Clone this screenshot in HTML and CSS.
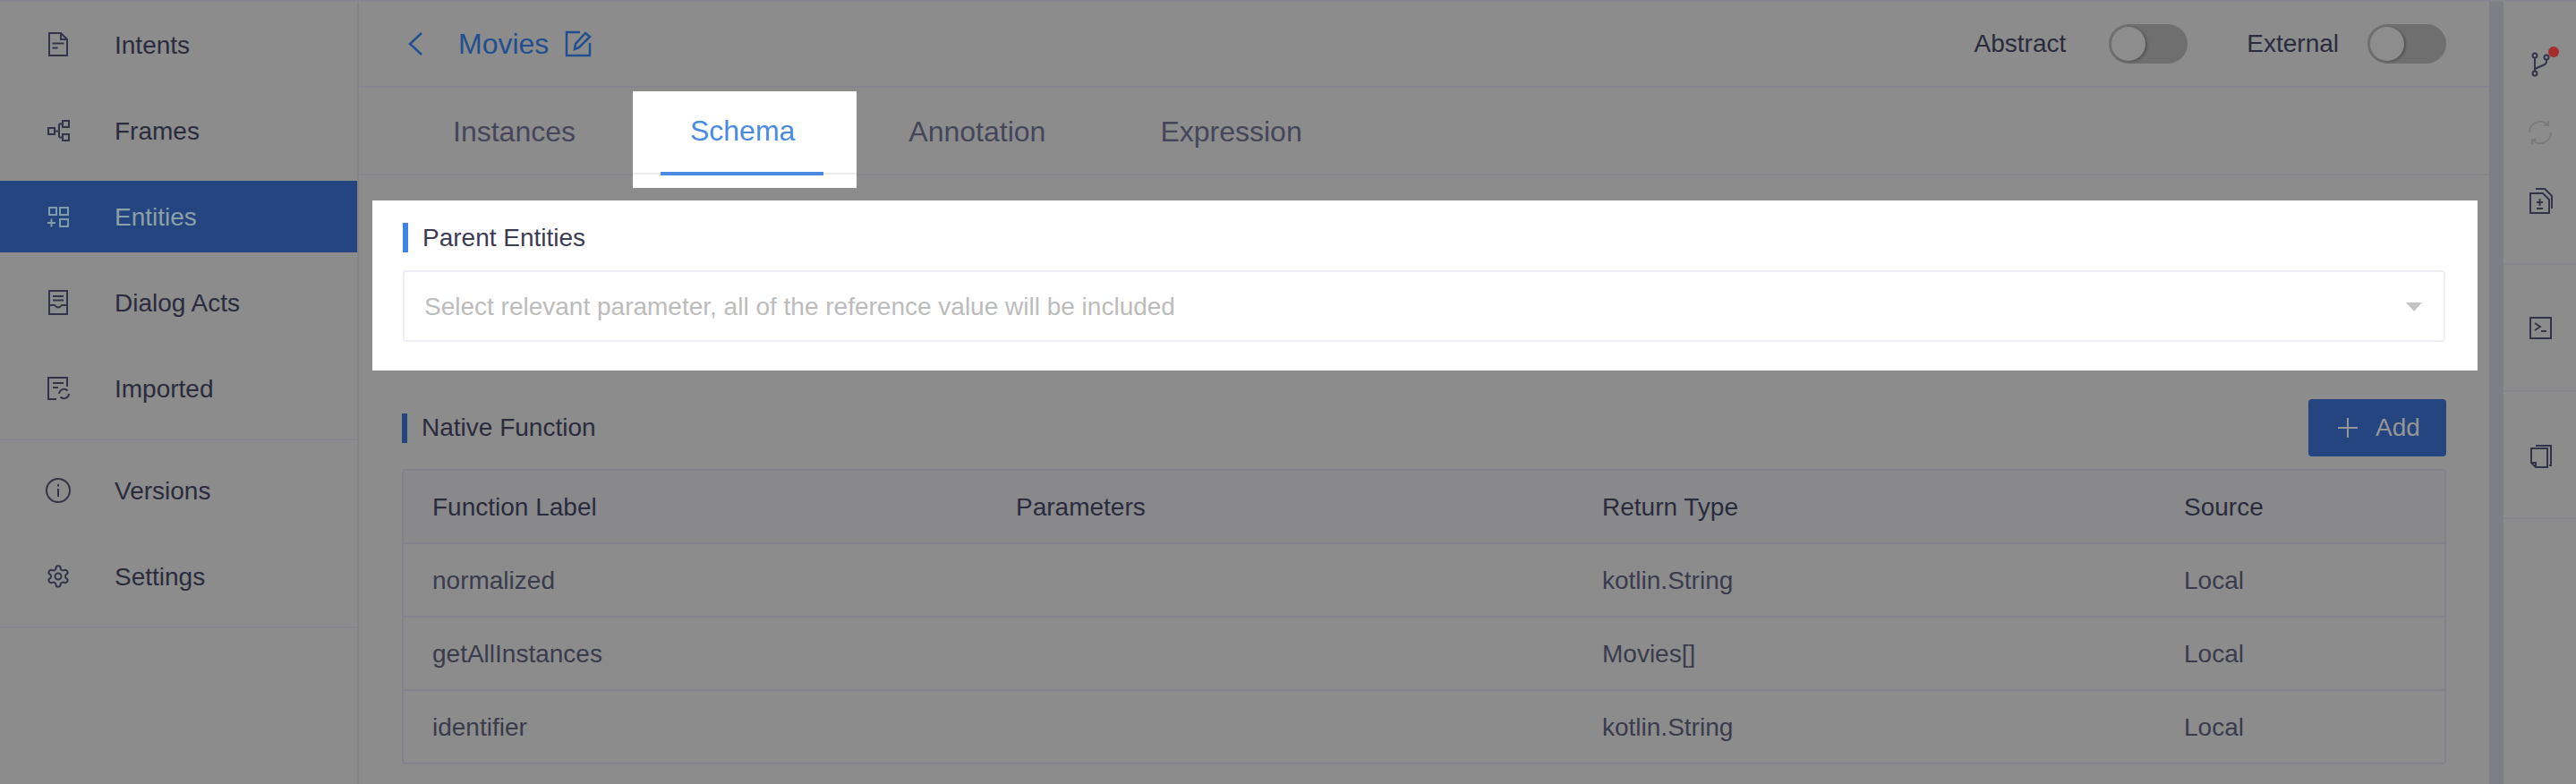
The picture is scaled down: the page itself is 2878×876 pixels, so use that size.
FILE: index.html
```html
<!DOCTYPE html>
<html lang="en">
<head>
    <meta charset="UTF-8">
    <title>Movies - Schema</title>
    <link rel="stylesheet" href="styles.css">
</head>
<body>
    <div class="app">
        <aside class="sidebar">
            <div class="menu-group">
                <div class="menu-item">
                    <svg class="icon" viewBox="0 0 28 28"><path d="M4 1h13l7 7v18H4z"/><path d="M17 1v7h7"/><path d="M7.500 12.500h13M7.500 17.500h6"/></svg>
                    <span>Intents</span>
                </div>
                <div class="menu-item">
                    <svg class="icon" viewBox="0 0 28 28"><rect x="3" y="11" width="7" height="7"/><rect x="19" y="3" width="7" height="7"/><rect x="19" y="18" width="7" height="7"/><path d="M10 14.500h5M15 6.500v15M15 6.500h4M15 21.500h4"/></svg>
                    <span>Frames</span>
                </div>
                <div class="menu-item active">
                    <svg class="icon" viewBox="0 0 28 28"><rect x="4" y="4" width="8" height="8"/><rect x="16" y="4" width="9" height="8"/><rect x="16" y="17" width="9" height="8"/><path d="M2 21h9M6.500 16.500v9"/></svg>
                    <span>Entities</span>
                </div>
                <div class="menu-item">
                    <svg class="icon" viewBox="0 0 28 28"><rect x="4" y="1" width="20" height="26"/><path d="M8 7h12M8 11.500h12M4 17h6q4 5 8 0h6"/></svg>
                    <span>Dialog Acts</span>
                </div>
                <div class="menu-item">
                    <svg class="icon" viewBox="0 0 28 28"><path d="M24 12V2H3v24h9"/><path d="M8 8h12M8 13h6"/><path d="M15 20a5.500 5.500 0 0 1 9.500-3.500M26 20a5.500 5.500 0 0 1-9.500 3.500"/></svg>
                    <span>Imported</span>
                </div>
            </div>
            <div class="menu-group">
                <div class="menu-item">
                    <svg class="icon" viewBox="0 0 28 28"><circle cx="14" cy="14" r="13"/><path d="M14 12v9M14 7v2.500"/></svg>
                    <span>Versions</span>
                </div>
                <div class="menu-item">
                    <svg class="icon" viewBox="0 0 24 24"><path class="thin" d="M12.220 2h-.44a2 2 0 0 0-2 2v.18a2 2 0 0 1-1 1.730l-.43.25a2 2 0 0 1-2 0l-.15-.08a2 2 0 0 0-2.730.73l-.22.38a2 2 0 0 0 .73 2.730l.15.1a2 2 0 0 1 1 1.720v.51a2 2 0 0 1-1 1.740l-.15.09a2 2 0 0 0-.73 2.730l.22.38a2 2 0 0 0 2.730.73l.15-.08a2 2 0 0 1 2 0l.43.25a2 2 0 0 1 1 1.730V20a2 2 0 0 0 2 2h.44a2 2 0 0 0 2-2v-.18a2 2 0 0 1 1-1.730l.43-.25a2 2 0 0 1 2 0l.15.08a2 2 0 0 0 2.730-.73l.22-.39a2 2 0 0 0-.73-2.730l-.15-.08a2 2 0 0 1-1-1.740v-.5a2 2 0 0 1 1-1.740l.15-.09a2 2 0 0 0 .73-2.730l-.22-.38a2 2 0 0 0-2.730-.73l-.15.08a2 2 0 0 1-2 0l-.43-.25a2 2 0 0 1-1-1.730V4a2 2 0 0 0-2-2z"/><circle class="thin" cx="12" cy="12" r="3"/></svg>
                    <span>Settings</span>
                </div>
            </div>
        </aside>

        <main class="main">
            <header class="topbar">
                <div class="title-wrap">
                    <svg class="back" viewBox="0 0 20 28"><path d="M17 2L4 14l13 12"/></svg>
                    <span class="title">Movies</span>
                    <svg class="edit" viewBox="0 0 30 30"><path d="M17 2H2v26h26V14"/><path d="M11 21l1-6L23 3l5 4-12 12z"/></svg>
                </div>
                <div class="switches">
                    <span>Abstract</span>
                    <div class="toggle"><div class="knob"></div></div>
                    <span class="switch-label">External</span>
                    <div class="toggle"><div class="knob"></div></div>
                </div>
            </header>

            <nav class="tabs">
                <div class="tab">Instances</div>
                <div class="tab tab-active"><div class="tab-inner">Schema</div></div>
                <div class="tab">Annotation</div>
                <div class="tab">Expression</div>
            </nav>

            <section class="panel">
                <h3 class="section-title">Parent Entities</h3>
                <div class="select">
                    <span>Select relevant parameter, all of the reference value will be included</span>
                    <div class="caret"></div>
                </div>
            </section>

            <section class="native">
                <div class="native-head">
                    <h3 class="section-title dim">Native Function</h3>
                    <button class="add-btn">
                        <svg viewBox="0 0 22 22"><path d="M11 0v22M0 11h22"/></svg>
                        Add
                    </button>
                </div>
                <div class="table-wrap">
                    <table>
                        <thead>
                            <tr><th class="col-a">Function Label</th><th class="col-b">Parameters</th><th class="col-c">Return Type</th><th>Source</th></tr>
                        </thead>
                        <tbody>
                            <tr><td>normalized</td><td></td><td>kotlin.String</td><td>Local</td></tr>
                            <tr><td>getAllInstances</td><td></td><td>Movies[]</td><td>Local</td></tr>
                            <tr><td>identifier</td><td></td><td>kotlin.String</td><td>Local</td></tr>
                        </tbody>
                    </table>
                </div>
            </section>
        </main>

        <div class="scrollbar"></div>

        <aside class="rail">
            <div class="rail-group first">
                <div class="rail-btn">
                    <svg class="icon" viewBox="0 0 28 28"><circle cx="8" cy="4" r="2.500"/><circle cx="8" cy="24" r="2.500"/><circle cx="21" cy="6" r="2.500"/><path d="M8 6.500v15M21 8.500v2q0 3-3 4l-10 4.500"/><circle class="dot" cx="29" cy="0" r="6"/></svg>
                </div>
                <div class="rail-btn">
                    <svg class="icon faded" viewBox="0 0 28 28"><path d="M2 14A12 12 0 0 1 23 6M26 14A12 12 0 0 1 5 22"/><path d="M23 1v5h-5M5 27v-5h5"/></svg>
                </div>
                <div class="rail-btn">
                    <svg class="icon" viewBox="0 0 28 28"><path d="M3 6h14l7 7v15H3z"/><path d="M9 1h10l8 8v14"/><path d="M13.500 12v8M10 16h7M10 23h7"/></svg>
                </div>
            </div>
            <div class="rail-group">
                <svg class="icon" viewBox="0 0 28 28"><rect x="3" y="3" width="23" height="23"/><path d="M8 9l6 4-6 4M15 18h6"/></svg>
            </div>
            <div class="rail-group">
                <svg class="icon" viewBox="0 0 28 28"><path d="M9 4h17v22h-2"/><path d="M4 7h18v21H9l-5-5z"/><path d="M4 23h5v5"/></svg>
            </div>
        </aside>
    </div>
</body>
</html>
```

FILE: styles.css
```css
* {
    box-sizing: border-box;
}
body {
    margin: 0;
    font-family: "Liberation Sans", Arial, sans-serif;
    font-size: 28px;
    color: #2a2b3d;
    background: #8c8c8c;
}
.app {
    display: flex;
    height: 876px;
    overflow: hidden;
    border-top: 2px solid #85858d;
}
.icon {
    width: 28px;
    height: 28px;
    flex: none;
    overflow: visible;
}
.icon * {
    fill: none;
    stroke: #33344a;
    stroke-width: 2;
}
.icon .thin {
    stroke-width: 1.700;
}
.icon .dot {
    fill: #a82c2c;
    stroke: none;
}

/* left menu */
.sidebar {
    width: 401px;
    flex: none;
    border-right: 2px solid #82828a;
}
.menu-group {
    padding: 8px 0 16px;
    border-bottom: 2px solid #85858c;
}
.menu-group + .menu-group {
    padding-top: 16px;
}
.menu-item {
    display: flex;
    align-items: center;
    gap: 49px;
    height: 80px;
    padding-left: 51px;
    margin-bottom: 16px;
}
.menu-item span {
    padding-top: 2px;
}
.menu-item:last-child {
    margin-bottom: 0;
}
.menu-item.active {
    background: #24457f;
    color: #8ca0a8;
}
.menu-item.active .icon * {
    stroke: #7f9ca8;
}

/* header */
.main {
    flex: 1;
    min-width: 0;
}
.topbar {
    display: flex;
    align-items: center;
    justify-content: space-between;
    height: 96px;
    padding: 0 48px 0 53px;
    border-bottom: 2px solid #85858d;
}
.title-wrap {
    display: flex;
    align-items: center;
}
.back {
    width: 20px;
    height: 28px;
    margin-right: 38px;
}
.back path, .edit path {
    fill: none;
    stroke: #224f8f;
    stroke-width: 2.500;
}
.title {
    font-size: 32px;
    color: #224f8f;
    margin-right: 18px;
}
.edit {
    width: 30px;
    height: 30px;
}
.switches {
    display: flex;
    align-items: center;
}
.switch-label {
    margin-left: 66px;
}
.toggle {
    width: 88px;
    height: 44px;
    margin-left: 48px;
    padding: 3px;
    border-radius: 22px;
    background: #6f6f6f;
}
.switch-label + .toggle {
    margin-left: 32px;
}
.knob {
    width: 38px;
    height: 38px;
    border-radius: 50%;
    background: #8d8d8d;
    box-shadow: 2px 1px 3px rgba(0,0,0,0.25);
}

/* tabs */
.tabs {
    display: flex;
    gap: 62px;
    height: 98px;
    padding-left: 72px;
    border-bottom: 2px solid #85858a;
    font-size: 32px;
    color: #45465a;
}
.tab {
    padding: 0 33px;
    line-height: 98px;
}
.tab-active {
    height: 108px;
    margin: 4px -37px 0 -31px;
    padding: 0 37px 0 31px;
    line-height: 88px;
    color: #4a8ae0;
    background: linear-gradient(#fff 91px, #ececec 91px, #ececec 93px, #fff 93px);
}
.tab-inner {
    height: 90px;
    padding: 0 32px 0 33px;
    box-shadow: 0 4px 0 #4a8ae0;
}

/* parent entities */
.section-title {
    height: 33px;
    margin: 0;
    padding-left: 16px;
    border-left: 6px solid #3f84e5;
    font-size: 28px;
    font-weight: normal;
    line-height: 34px;
    color: #3b3c54;
}
.section-title.dim {
    color: #2a2b3d;
    border-left-color: #24457f;
    line-height: 32px;
}
.panel {
    margin: 28px 13px 0 15px;
    padding: 25px 36px 32px 34px;
    background: #fff;
}
.select {
    display: flex;
    align-items: center;
    justify-content: space-between;
    height: 80px;
    margin-top: 20px;
    padding: 2px 24px 0 22px;
    border: 2px solid #edeef6;
    border-radius: 4px;
    color: #bcbcbc;
}
.caret {
    width: 0;
    height: 0;
    border-left: 9px solid transparent;
    border-right: 9px solid transparent;
    border-top: 10px solid #c4c4c4;
}

/* native function */
.native {
    margin: 32px 48px 0 48px;
}
.native-head {
    display: flex;
    align-items: center;
    justify-content: space-between;
    height: 64px;
}
.add-btn {
    display: flex;
    align-items: center;
    gap: 20px;
    width: 154px;
    height: 64px;
    padding: 0 0 0 33px;
    border: none;
    border-radius: 4px;
    background: #24457f;
    color: #969696;
    font: inherit;
}
.add-btn svg {
    width: 22px;
    height: 22px;
}
.add-btn path {
    stroke: #969696;
    stroke-width: 2;
}
.table-wrap {
    margin-top: 14px;
    border: 2px solid #82828a;
    border-radius: 4px;
}
table {
    width: 100%;
    table-layout: fixed;
    border-spacing: 0;
}
th, td {
    height: 82px;
    padding: 2px 0 0 32px;
    text-align: left;
    font-weight: normal;
    border-bottom: 2px solid #82828a;
    color: #3a3b4c;
}
th {
    background: #89898c;
    color: #2a2b3d;
}
tr:last-child td {
    border-bottom: none;
    height: 80px;
}
.col-a {
    width: 652px;
}
.col-b {
    width: 655px;
}
.col-c {
    width: 650px;
}

/* right side */
.scrollbar {
    width: 16px;
    flex: none;
    background: #7e7e86;
}
.rail {
    width: 81px;
    flex: none;
}
.rail-group {
    display: flex;
    align-items: center;
    justify-content: center;
    height: 142px;
    padding-left: 1px;
    border-bottom: 2px solid #85858a;
}
.rail-group.first {
    flex-direction: column;
    height: 294px;
}
.rail-btn {
    display: flex;
    align-items: center;
    height: 76px;
}
.icon.faded * {
    stroke: #7a7a7a;
}
```
